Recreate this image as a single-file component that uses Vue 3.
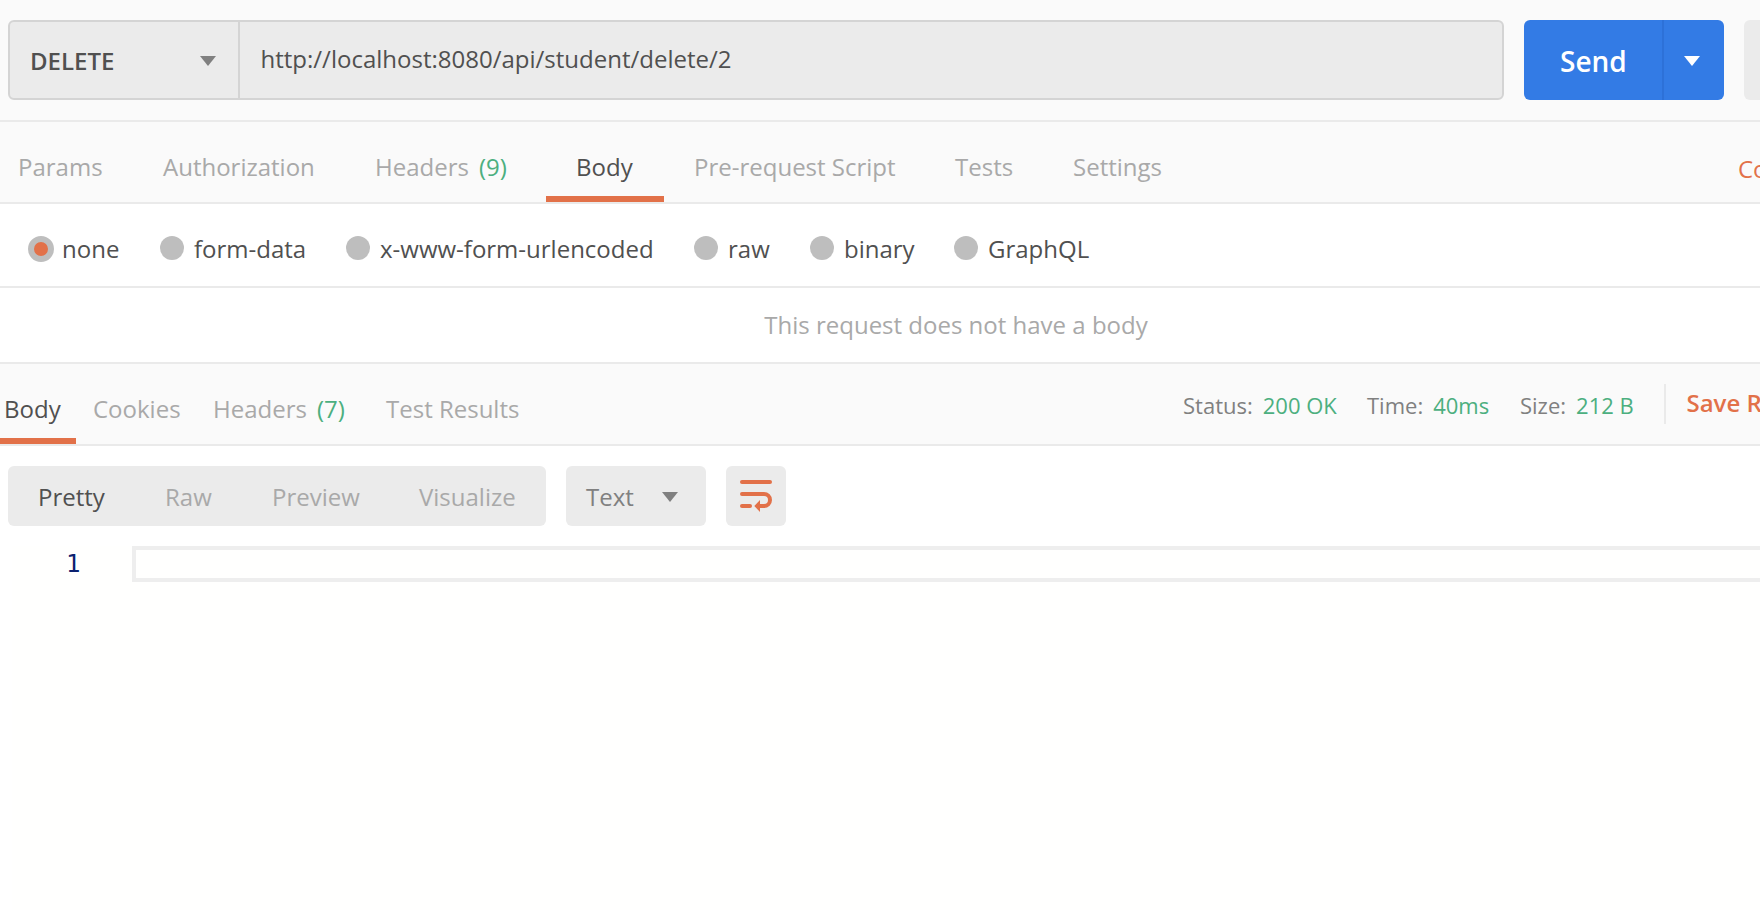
<script setup>
const requestTabs = [
  { label: 'Params' },
  { label: 'Authorization' },
  { label: 'Headers', count: '(9)' },
  { label: 'Body', active: true },
  { label: 'Pre-request Script' },
  { label: 'Tests' },
  { label: 'Settings' },
]
const bodyTypes = ['none', 'form-data', 'x-www-form-urlencoded', 'raw', 'binary', 'GraphQL']
const responseTabs = [
  { label: 'Body', active: true },
  { label: 'Cookies' },
  { label: 'Headers', count: '(7)' },
  { label: 'Test Results' },
]
const stats = [
  { label: 'Status:', value: '200 OK' },
  { label: 'Time:', value: '40ms' },
  { label: 'Size:', value: '212 B' },
]
const views = ['Pretty', 'Raw', 'Preview', 'Visualize']
</script>

<template>
  <div class="app">
    <header class="request-bar">
      <div class="address">
        <div class="method">
          <span>DELETE</span>
          <svg class="caret" width="16" height="10" viewBox="0 0 16 10"><path d="M0 0h16L8 10z" /></svg>
        </div>
        <div class="url">http://localhost:8080/api/student/delete/2</div>
      </div>
      <div class="send">
        <span class="send-label">Send</span>
        <span class="send-more">
          <svg class="caret" width="16" height="10" viewBox="0 0 16 10"><path d="M0 0h16L8 10z" /></svg>
        </span>
      </div>
      <div class="save"></div>
    </header>

    <nav class="request-tabs">
      <div v-for="t in requestTabs" :key="t.label" class="tab" :class="{ active: t.active }">
        <span>{{ t.label }}</span><span v-if="t.count" class="count">{{ t.count }}</span>
      </div>
      <span class="cookies">Cookies</span>
    </nav>

    <section class="body-types">
      <div v-for="(b, i) in bodyTypes" :key="b" class="type">
        <span class="radio" :class="{ checked: i === 0 }"></span>
        <span>{{ b }}</span>
      </div>
    </section>

    <section class="message"><p>This request does not have a body</p></section>

    <nav class="response-bar">
      <div class="response-tabs">
        <div v-for="t in responseTabs" :key="t.label" class="tab" :class="{ active: t.active }">
          <span>{{ t.label }}</span><span v-if="t.count" class="count">{{ t.count }}</span>
        </div>
      </div>
      <div class="stats">
        <div v-for="s in stats" :key="s.label" class="stat">
          <span>{{ s.label }}</span><span class="value">{{ s.value }}</span>
        </div>
      </div>
      <div class="save-response">Save Response</div>
    </nav>

    <section class="toolbar">
      <div class="views">
        <span v-for="(v, i) in views" :key="v" :class="{ current: i === 0 }">{{ v }}</span>
      </div>
      <div class="format">
        <span>Text</span>
        <svg class="caret" width="16" height="10" viewBox="0 0 16 10"><path d="M0 0h16L8 10z" /></svg>
      </div>
      <div class="wrap">
        <svg width="60" height="60" viewBox="0 0 60 60">
          <g fill="none" stroke="#e27149" stroke-width="4" stroke-linecap="round">
            <path d="M16 16H44" />
            <path d="M16 28H38a6 6 0 0 1 0 12" />
            <path d="M16 40H24" />
          </g>
          <path d="M39 38H34V34L28.3 40L34 46V42H39z" fill="#e27149" />
        </svg>
      </div>
    </section>

    <section class="editor">
      <span class="line-number">1</span>
      <div class="line"></div>
    </section>
  </div>
</template>

<style>
body {
  overflow: hidden;
}
</style>

<style scoped>
.app {
  width: 1760px;
  height: 910px;
  overflow: hidden;
  display: flex;
  flex-direction: column;
  background: #fff;
  color: #505050;
  font: 24px/33px "Open Sans", "Noto Sans", sans-serif;
  white-space: nowrap;
}
.app * {
  box-sizing: border-box;
}
.app > * {
  flex: none;
}
.caret {
  display: block;
  fill: #808080;
}
.request-bar {
  display: flex;
  gap: 20px;
  height: 122px;
  padding: 20px 0 20px 8px;
  background: #fafafa;
  border-bottom: 2px solid #eaeaea;
}
.address {
  display: flex;
  flex: none;
  width: 1496px;
  height: 80px;
  border: 2px solid #d4d4d4;
  border-radius: 6px;
  background: #ebebeb;
}
.method {
  display: flex;
  justify-content: space-between;
  width: 230px;
  padding: 22px 22px 0 20px;
  border-right: 2px solid #d4d4d4;
  font-weight: 600;
}
.method .caret {
  margin-top: 12px;
}
.url {
  padding: 20px 0 0 20.5px;
}
.send {
  display: flex;
  flex: none;
  width: 200px;
  height: 80px;
  border-radius: 6px;
  background: #337be5;
  color: #fff;
}
.send-label {
  width: 138px;
  padding: 22px 0 0 36px;
  font-size: 28px;
  line-height: 38px;
  font-weight: 600;
}
.send-more {
  width: 62px;
  padding: 36px 0 0 20px;
  border-left: 2px solid #2d71d8;
}
.send-more .caret {
  fill: #fff;
}
.save {
  flex: none;
  width: 120px;
  height: 80px;
  border-radius: 6px;
  background: #ebebeb;
}
.tab {
  height: 80px;
  color: #a9a9a9;
}
.tab.active {
  color: #505050;
  border-bottom: 6px solid #e27149;
}
.count {
  margin-left: 10px;
  color: #4caf7f;
}
.request-tabs {
  display: grid;
  grid-template-columns: 145px 212px 189px 118px 273px 118px 683px 200px;
  height: 82px;
  background: #fafafa;
  border-bottom: 2px solid #eaeaea;
}
.request-tabs .tab {
  padding: 28px 0 0 18px;
}
.request-tabs .tab.active,
.request-tabs .tab.active + .tab {
  padding-left: 30px;
}
.cookies {
  padding-top: 30px;
  color: #e27149;
}
.body-types {
  display: grid;
  grid-template-columns: 132px 186px 348px 116px 144px 300px;
  height: 84px;
  padding: 28px 0 0 28px;
  border-bottom: 2px solid #eaeaea;
}
.type {
  display: flex;
  gap: 10px;
}
.radio {
  flex: none;
  width: 24px;
  height: 24px;
  margin-top: 4px;
  border-radius: 50%;
  background: #bebebe;
}
.radio.checked {
  width: 26px;
  height: 26px;
  margin-right: -2px;
  border: 6px solid #bebebe;
  background: #e27149;
}
.message {
  width: 1912px;
  height: 76px;
  padding-top: 20px;
  border-bottom: 2px solid #eaeaea;
  color: #a9a9a9;
  text-align: center;
}
.message p {
  margin: 0;
}
.response-bar {
  display: flex;
  height: 82px;
  background: #fafafa;
  border-bottom: 2px solid #eaeaea;
}
.response-tabs {
  display: grid;
  grid-template-columns: 76px 120px 173px 814px;
}
.response-tabs .tab {
  padding: 28px 0 0 17px;
}
.response-tabs .tab.active {
  padding-left: 4px;
}
.stats {
  display: grid;
  grid-template-columns: 184px 153px 144px;
  padding-top: 26px;
  font-size: 22px;
  line-height: 30px;
  color: #808080;
}
.value {
  margin-left: 10px;
  color: #4caf7f;
}
.save-response {
  height: 40px;
  margin-top: 20px;
  padding: 2px 0 0 20.5px;
  border-left: 2px solid #eaeaea;
  color: #e27149;
  font-weight: 600;
}
.toolbar {
  display: flex;
  gap: 20px;
  height: 100px;
  padding: 20px 0 0 8px;
}
.views,
.format,
.wrap {
  height: 60px;
  border-radius: 6px;
  background: #ebebeb;
}
.views {
  display: grid;
  grid-template-columns: 127px 107px 147px 127px;
  width: 538px;
  padding: 14px 0 0 30px;
  color: #a9a9a9;
}
.views .current {
  color: #505050;
}
.format {
  display: flex;
  justify-content: space-between;
  width: 140px;
  padding: 14px 28px 0 20px;
  color: #808080;
}
.format .caret {
  margin-top: 12px;
}
.wrap {
  width: 60px;
}
.wrap svg {
  display: block;
}
.editor {
  display: flex;
  height: 364px;
  margin-left: 12px;
  background: #fffffe;
}
.line-number {
  width: 120px;
  padding-left: 54px;
  color: #0b216f;
  font: 24px/36px "DejaVu Sans Mono", monospace;
}
.line {
  flex: 1;
  height: 36px;
  margin-right: -8px;
  border: 4px solid #eee;
}
</style>
